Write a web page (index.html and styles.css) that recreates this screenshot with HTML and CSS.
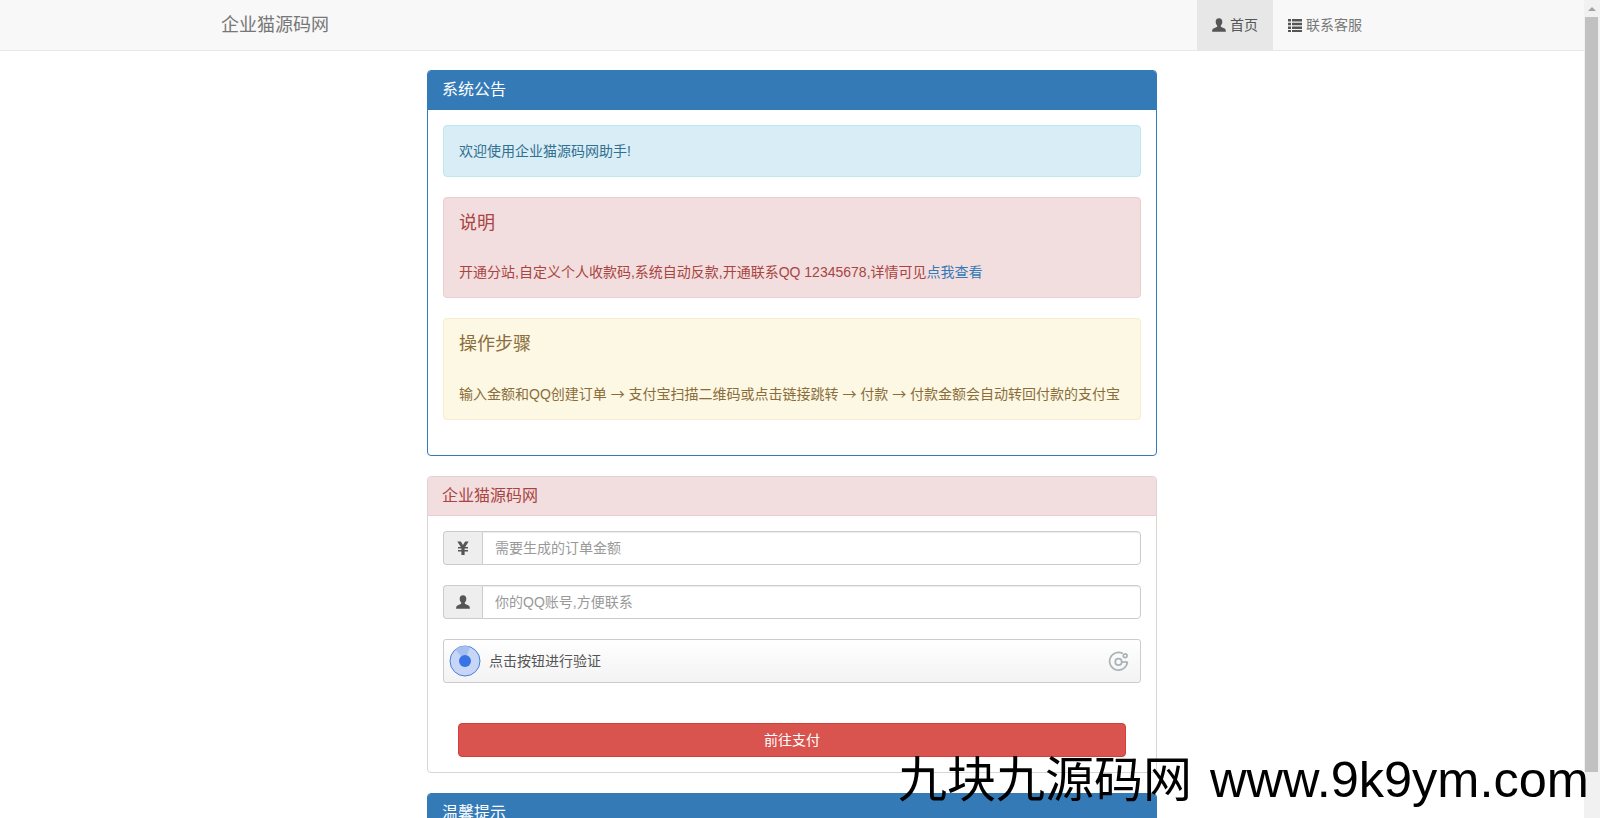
FILE: index.html
```html
<!DOCTYPE html>
<html lang="zh-CN">
<head>
<meta charset="utf-8">
<title>企业猫源码网</title>
<link rel="stylesheet" href="styles.css">
</head>
<body>
<div class="page">
  <nav class="navbar">
    <div class="nav-container">
      <a class="brand" href="#">企业猫源码网</a>
      <ul class="nav-links">
        <li class="active"><a href="#"><svg class="gi" viewBox="0 0 14 14"><path d="M7 .3c-2.200 0-3.300 1.500-3.300 3.500 0 1.600.6 3 1.500 3.800v1.200L1.500 10.400C.6 10.800.2 11.500.1 13.700h13.800c-.1-2.200-.5-2.900-1.400-3.300L8.800 8.800V7.600c.9-.8 1.500-2.200 1.500-3.800C10.300 1.800 9.200.3 7 .3z"/></svg> 首页</a></li>
        <li><a href="#"><svg class="gi" viewBox="0 0 14 14"><path d="M0 1h3v2.500H0zM4 1h10v2.500H4zM0 4.700h3v2.500H0zM4 4.700h10v2.500H4zM0 8.400h3v2.500H0zM4 8.400h10v2.500H4zM0 12h3v2H0zM4 12h10v2H4z"/></svg> 联系客服</a></li>
      </ul>
    </div>
  </nav>

  <main class="content">
    <section class="panel panel-primary">
      <div class="panel-heading">系统公告</div>
      <div class="panel-body">
        <div class="alert alert-info">欢迎使用企业猫源码网助手!</div>
        <div class="alert alert-danger">
          <h4>说明</h4>
          <p>开通分站,自定义个人收款码,系统自动反款,开通联系QQ 12345678,详情可见<a href="#">点我查看</a></p>
        </div>
        <div class="alert alert-warning">
          <h4>操作步骤</h4>
          <p>输入金额和QQ创建订单 <span class="arrow">→</span> 支付宝扫描二维码或点击链接跳转 <span class="arrow">→</span> 付款 <span class="arrow">→</span> 付款金额会自动转回付款的支付宝</p>
        </div>
      </div>
    </section>

    <section class="panel panel-danger">
      <div class="panel-heading">企业猫源码网</div>
      <div class="panel-body">
        <form class="order-form">
          <div class="input-group">
            <span class="addon"><svg class="gi" viewBox="0 0 14 14"><path d="M1.300.5h3.600L7 4l2.100-3.500h3.600L9.200 6h2.800v1.600H8.600V9H12v1.600H8.600V14H5.400v-3.400H2V9h3.400V7.600H2V6h2.800z"/></svg></span>
            <input type="text" placeholder="需要生成的订单金额">
          </div>
          <div class="input-group">
            <span class="addon"><svg class="gi" viewBox="0 0 14 14"><path d="M7 .3c-2.200 0-3.300 1.500-3.300 3.500 0 1.600.6 3 1.500 3.800v1.200L1.500 10.400C.6 10.800.2 11.500.1 13.700h13.800c-.1-2.200-.5-2.900-1.400-3.300L8.800 8.800V7.600c.9-.8 1.500-2.200 1.500-3.800C10.300 1.800 9.200.3 7 .3z"/></svg></span>
            <input type="text" placeholder="你的QQ账号,方便联系">
          </div>
          <div class="captcha">
            <svg class="captcha-knob" viewBox="0 0 32 32">
              <circle cx="16" cy="16" r="15" fill="#c6d6f4" stroke="#4a7bdc" stroke-width="1"/>
              <path d="M16 16 L6.500 4.500 A15 15 0 0 1 21 2 z" fill="#a5bff0"/>
              <circle cx="16" cy="16" r="6" fill="#3873e6"/>
            </svg>
            <span class="captcha-text">点击按钮进行验证</span>
            <svg class="captcha-logo" viewBox="0 0 22 22" fill="none" stroke="#aab4b8" stroke-width="1.800">
              <path d="M15.500 2.600A9.300 9.300 0 1 0 20.300 11"/>
              <circle cx="11" cy="11.500" r="3.400"/>
              <circle cx="18" cy="5" r="2"/>
              <path d="M14.500 11.500h5.500"/>
            </svg>
          </div>
          <button type="button" class="btn-pay">前往支付</button>
        </form>
      </div>
    </section>

    <section class="panel panel-primary">
      <div class="panel-heading">温馨提示</div>
    </section>
  </main>
</div>
<aside class="scrollbar">
  <div class="sb-button"><span class="sb-arrow"></span></div>
  <div class="sb-thumb"></div>
  <div class="sb-track"></div>
</aside>
<div class="watermark"><span class="wm-cn">九块九源码网</span> www.9k9ym.com</div>
</body>
</html>
```
FILE: styles.css
```css
* { box-sizing: border-box; }
html, body { margin: 0; height: 818px; overflow: hidden; }
body {
  position: relative;
  display: flex;
  background: #fff;
  color: #333;
  font: 14px/20px "Liberation Sans", "Noto Sans CJK SC", sans-serif;
}
a { text-decoration: none; color: #337ab7; }

.page { flex: 1; min-width: 0; height: 818px; overflow: hidden; }

.navbar {
  height: 51px;
  margin-bottom: 19px;
  background: #f8f8f8;
  border-bottom: 1px solid #e7e7e7;
}
.nav-container {
  width: 1170px;
  margin: 0 auto;
  display: flex;
  justify-content: space-between;
}
.brand {
  padding: 15px 15px 15px 14px;
  font-size: 18px;
  color: #777;
  height: 50px;
}
.nav-links { display: flex; margin: 0; padding: 0; list-style: none; }
.nav-links a {
  display: flex;
  align-items: center;
  gap: 4px;
  height: 50px;
  padding: 0 15px;
  color: #777;
}
.nav-links .active a { background: #e7e7e7; color: #555; }

.gi { width: 14px; height: 14px; flex: none; fill: #555; }

.content { width: 730px; margin: 0 auto; }

.panel {
  margin-bottom: 20px;
  border: 1px solid #337ab7;
  border-radius: 4px;
  background: #fff;
}
.panel-primary .panel-heading { background: #337ab7; color: #fff; }
.panel-danger { border-color: #dcd3d5; }
.panel-danger .panel-heading {
  background: #f2dede;
  color: #a94442;
  border-bottom: 1px solid #ebccd1;
}
.panel-heading {
  height: 39px;
  padding: 9px 14px;
  font-size: 16px;
  line-height: 20px;
  border-radius: 3px 3px 0 0;
}
.panel-body { padding: 15px; }

.alert {
  padding: 15px;
  margin-bottom: 20px;
  border: 1px solid transparent;
  border-radius: 4px;
}
.alert h4 {
  margin: 0 0 29px;
  font-size: 18px;
  font-weight: 400;
  line-height: 20px;
}
.alert p { margin: 0; }
.alert-info { background: #d9edf7; border-color: #bce8f1; color: #31708f; }
.alert-danger { background: #f2dede; border-color: #ebccd1; color: #a94442; }
.alert-warning { background: #fcf8e3; border-color: #faebcc; color: #8a6d3b; }
.arrow { font-family: "Noto Sans CJK SC", sans-serif; }

.order-form { display: flex; flex-direction: column; gap: 20px; }
.input-group { display: flex; height: 34px; }
.addon {
  display: flex;
  align-items: center;
  justify-content: center;
  width: 39px;
  background: #eee;
  border: 1px solid #ccc;
  border-right: 0;
  border-radius: 4px 0 0 4px;
}
.input-group input {
  flex: 1;
  min-width: 0;
  padding: 6px 12px;
  border: 1px solid #ccc;
  border-radius: 0 4px 4px 0;
  box-shadow: inset 0 1px 1px rgba(0,0,0,.075);
  color: #555;
  font: inherit;
}
.input-group input::placeholder { color: #999; opacity: 1; }

.captcha {
  display: flex;
  align-items: center;
  height: 44px;
  padding: 0 11px 0 5px;
  border: 1px solid #ccc;
  border-radius: 3px;
  background: linear-gradient(180deg, #fff, #f3f3f3);
  color: #555;
}
.captcha-knob { width: 32px; height: 32px; flex: none; }
.captcha-text { flex: 1; margin-left: 8px; }
.captcha-logo { width: 21px; height: 21px; flex: none; }

.btn-pay {
  display: block;
  width: 668px;
  height: 34px;
  margin: 20px auto 0;
  padding: 0;
  border: 1px solid #d43f3a;
  border-radius: 4px;
  background: #d9534f;
  color: #fff;
  font: inherit;
}

.watermark {
  position: absolute;
  left: 898px;
  top: 751px;
  font-size: 50.5px;
  line-height: 58px;
  color: #000;
  white-space: nowrap;
}
.wm-cn { font-size: 49px; margin-right: 4px; }

.scrollbar {
  flex: none;
  width: 16px;
  height: 818px;
  display: flex;
  flex-direction: column;
  background: #f1f1f1;
}
.sb-button {
  height: 17px;
  display: flex;
  align-items: center;
  justify-content: center;
}
.sb-arrow {
  width: 0;
  height: 0;
  border-left: 4px solid transparent;
  border-right: 4px solid transparent;
  border-bottom: 4px solid #a3a3a3;
}
.sb-thumb { height: 755px; margin: 0 2px 0 1px; background: #c1c1c1; }
.sb-track { flex: 1; }
```
